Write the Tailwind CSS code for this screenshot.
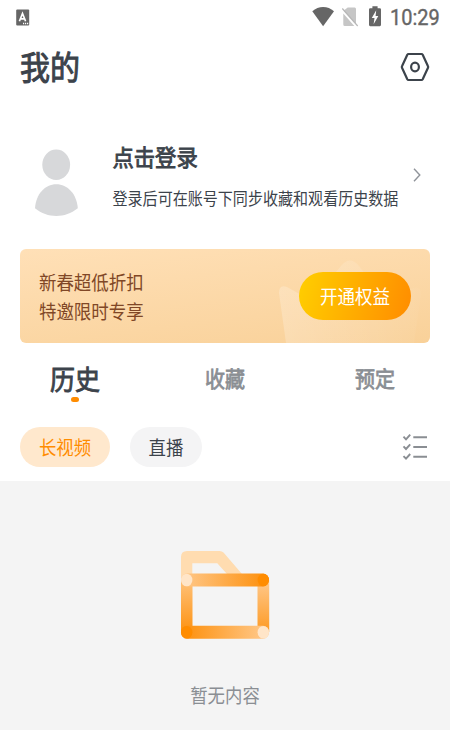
<!DOCTYPE html>
<html lang="zh-CN">
<head>
<meta charset="utf-8">
<title>我的</title>
<script src="https://cdn.jsdelivr.net/npm/@tailwindcss/browser@4"></script>
</head>
<body class="w-[450px] h-[730px] overflow-hidden bg-white text-[#3c434b] font-['Noto_Sans_CJK_SC',sans-serif] leading-none whitespace-nowrap flex flex-col">
  <!-- status bar -->
  <div class="h-[34px] pl-4 pr-[10px] flex items-center justify-between shrink-0">
    <svg class="w-[14px] h-[17px]" viewBox="0 0 14 17">
      <rect x=".2" y=".5" width="13" height="16" rx="1" fill="#666"/>
      <path d="M3.4 12.2 6.5 4.5 9.6 12.2M4.5 9.8h4" fill="none" stroke="#fff" stroke-width="1.7"/>
      <path d="M7 14.5h5.5" stroke="#fff" stroke-width="1.3" stroke-dasharray="1.2 .8"/>
    </svg>
    <div class="flex items-center">
      <svg class="w-[72px] h-[22px]" viewBox="312 6 72 22">
        <path d="M312.3 11.3C318.5 5.6 327.8 5.6 334 11.3L323.1 26.2Z" fill="#666"/>
        <path d="M347.7 7.5H354.7Q356 7.5 356 9V24.2L343.5 10.8ZM343.3 13.5 354.3 25.9H344.8Q343.3 25.9 343.3 24.4Z" fill="#c6c6c6"/>
        <path d="M342.3 8.5 357.7 26" stroke="#b8b8b8" stroke-width="1.2"/>
        <path d="M369 9.5Q369 8.2 370.2 8.2H372.4V6.3H377.6V8.2H379.8Q381 8.2 381 9.5V24.8Q381 26.2 379.8 26.2H370.2Q369 26.2 369 24.8Z" fill="#666"/>
        <path d="M376.2 10.2 371.8 18H374.5L373.6 24.3 378.3 16H375.6Z" fill="#fff"/>
      </svg>
      <span class="ml-[6px] w-[50px] text-[20px] text-[#666] font-['Roboto',sans-serif] scale-y-[1.12] [-webkit-text-stroke:0.35px_#666]">10:29</span>
    </div>
  </div>

  <!-- page title -->
  <header class="h-[66px] px-5 flex items-center justify-between shrink-0">
    <h1 class="text-[30px] scale-y-[1.1] -mt-[3px] [-webkit-text-stroke:0.9px_#3c434b]">我的</h1>
    <svg class="w-[30px] h-[30px]" viewBox="400 52 30 30" fill="none" stroke="#3c434b" stroke-width="2.2" stroke-linejoin="round">
      <path d="M408.5 54H421.5Q422.3 54 422.7 54.7L428 66.2Q428.4 67 428 67.8L422.7 79.3Q422.3 80 421.5 80H408.5Q407.7 80 407.3 79.3L402 67.8Q401.6 67 402 66.2L407.3 54.7Q407.7 54 408.5 54Z"/>
      <ellipse cx="415" cy="67" rx="3.9" ry="4.4"/>
    </svg>
  </header>

  <!-- login -->
  <section class="h-[149px] pl-[34px] pr-[28px] flex items-center shrink-0">
    <svg class="w-[45px] h-[68px] mt-[17px]" viewBox="34 149 45 68" fill="#d7d8da">
      <ellipse cx="56.2" cy="164.7" rx="13.9" ry="15.3"/>
      <path d="M35 208.3C36 194 45 184.3 56.3 184.3S76.7 194 77.8 208.3C71 213.5 64 216 56.3 216S41.5 213.5 35 208.3Z"/>
    </svg>
    <div class="ml-[33.5px] flex flex-col gap-[23px] mt-[1px]">
      <h2 class="text-[21.3px] scale-y-[1.08] [-webkit-text-stroke:0.8px_#3c434b]">点击登录</h2>
      <p class="text-[15.05px] scale-y-[1.1]">登录后可在账号下同步收藏和观看历史数据</p>
    </div>
    <svg class="ml-auto w-[10px] h-[16px]" viewBox="0 0 10 16" fill="none" stroke="#90949a" stroke-width="1.4"><path d="M2 1.8 7.8 8 2 14.2"/></svg>
  </section>

  <!-- membership banner -->
  <section class="relative overflow-hidden mx-5 h-[94px] rounded-[6px] bg-linear-[173deg] from-[#ffe0b7] to-[#f9d199] pl-[19px] pr-[19px] flex items-center justify-between shrink-0">
    <svg class="absolute inset-0 w-full h-full" viewBox="20 249 410 94">
      <defs><linearGradient id="crown"><stop stop-color="#fff" stop-opacity=".22"/><stop offset="1" stop-color="#fff" stop-opacity=".03"/></linearGradient></defs>
      <path d="M286 343 279 293Q279 284 287 287L312 301 341 266Q350 255 359 266L388 304 413 288Q421 286 421 294L414 343Z" fill="url(#crown)"/>
    </svg>
    <div class="relative text-[17.45px] leading-[29px] text-[#804726]">
      <p class="scale-y-[1.1]">新春超低折扣</p>
      <p class="scale-y-[1.1]">特邀限时专享</p>
    </div>
    <button class="relative w-[112px] h-[48px] rounded-full bg-linear-[105deg] from-[#ffcf00] to-[#ff8c00] text-white text-[17.5px] flex items-center justify-center"><span class="scale-y-[1.1] -mt-px">开通权益</span></button>
  </section>

  <!-- tabs -->
  <nav class="h-[72px] grid grid-cols-3 text-[20px] text-[#8a8e93] text-center shrink-0">
    <div class="flex flex-col items-center pt-[23px] text-[#3c434b]">
      <span class="text-[25px] scale-y-[1.1] [-webkit-text-stroke:0.8px_#3c434b]">历史</span>
      <i class="mt-[6px] w-2 h-[5px] rounded-full bg-[#ff8c00]"></i>
    </div>
    <div class="pt-[25px]"><span class="inline-block scale-y-[1.1] [-webkit-text-stroke:0.7px_#8a8e93]">收藏</span></div>
    <div class="pt-[25px]"><span class="inline-block scale-y-[1.1] [-webkit-text-stroke:0.7px_#8a8e93]">预定</span></div>
  </nav>

  <!-- filters -->
  <div class="h-[66px] pt-3 pl-5 pr-[22px] flex items-start shrink-0 text-[17.4px]">
    <span class="w-[90px] h-[40px] rounded-full bg-[#ffe8cd] text-[#ff8c00] flex items-center justify-center"><span class="scale-y-[1.1] -mt-px">长视频</span></span>
    <span class="ml-5 w-[72px] h-[40px] rounded-full bg-[#f4f4f5] flex items-center justify-center"><span class="scale-y-[1.1] -mt-px">直播</span></span>
    <svg class="ml-auto mt-[6px] w-[26px] h-[28px]" viewBox="402 433 26 28" fill="none" stroke="#8a8e93" stroke-width="1.9">
      <path d="M413.3 437.3H427M413.3 447H427M413.3 456.7H427M403.5 436.7 406 439.3 410.2 434.6M403.5 446.4 406 449 410.2 444.3M403.5 456.1 406 458.7 410.2 454"/>
    </svg>
  </div>

  <!-- empty state -->
  <main class="flex-1 bg-[#f4f4f4] flex flex-col items-center pt-[69px]">
    <svg class="w-[90px] h-[90px]" viewBox="180 550 90 90">
      <defs>
        <linearGradient id="top"><stop stop-color="#ffc98c"/><stop offset="1" stop-color="#fd8e08"/></linearGradient>
        <linearGradient id="bottom"><stop stop-color="#fd8e08"/><stop offset="1" stop-color="#ffcb90"/></linearGradient>
        <linearGradient id="left" x1="0" y1="1" x2="0" y2="0"><stop stop-color="#fd9212"/><stop offset="1" stop-color="#ffc27a"/></linearGradient>
        <linearGradient id="right" x1="0" y1="0" x2="0" y2="1"><stop stop-color="#ffc98c"/><stop offset="1" stop-color="#fd9a24"/></linearGradient>
      </defs>
      <path d="M181 580V557Q181 551 187 551H219.5Q222 551 223.5 552.5L242 574H227L217.3 563.3H192.3V580Z" fill="#ffdcb0"/>
      <path d="M181 580H192.5V632H181Z" fill="url(#left)"/>
      <path d="M257.5 580H269.2V632H257.5Z" fill="url(#right)"/>
      <path d="M187 573.5H263A6 6.5 0 0 1 263 586.5H187A6 6.5 0 0 1 187 573.5Z" fill="url(#top)"/>
      <path d="M187 625.7H263A6 6.5 0 0 1 263 638.7H187A6 6.5 0 0 1 187 625.7Z" fill="url(#bottom)"/>
      <g fill="#ffe5c8"><ellipse cx="186.7" cy="580" rx="5.7" ry="6.3"/><ellipse cx="263.3" cy="632.2" rx="5.7" ry="6.3"/></g>
      <g fill="#ff8c00"><ellipse cx="263.3" cy="580" rx="5.7" ry="6.3"/><ellipse cx="186.7" cy="632.2" rx="5.7" ry="6.3"/></g>
    </svg>
    <p class="mt-[46px] text-[17.4px] text-[#8a8e93] scale-y-[1.1]">暂无内容</p>
  </main>
</body>
</html>
